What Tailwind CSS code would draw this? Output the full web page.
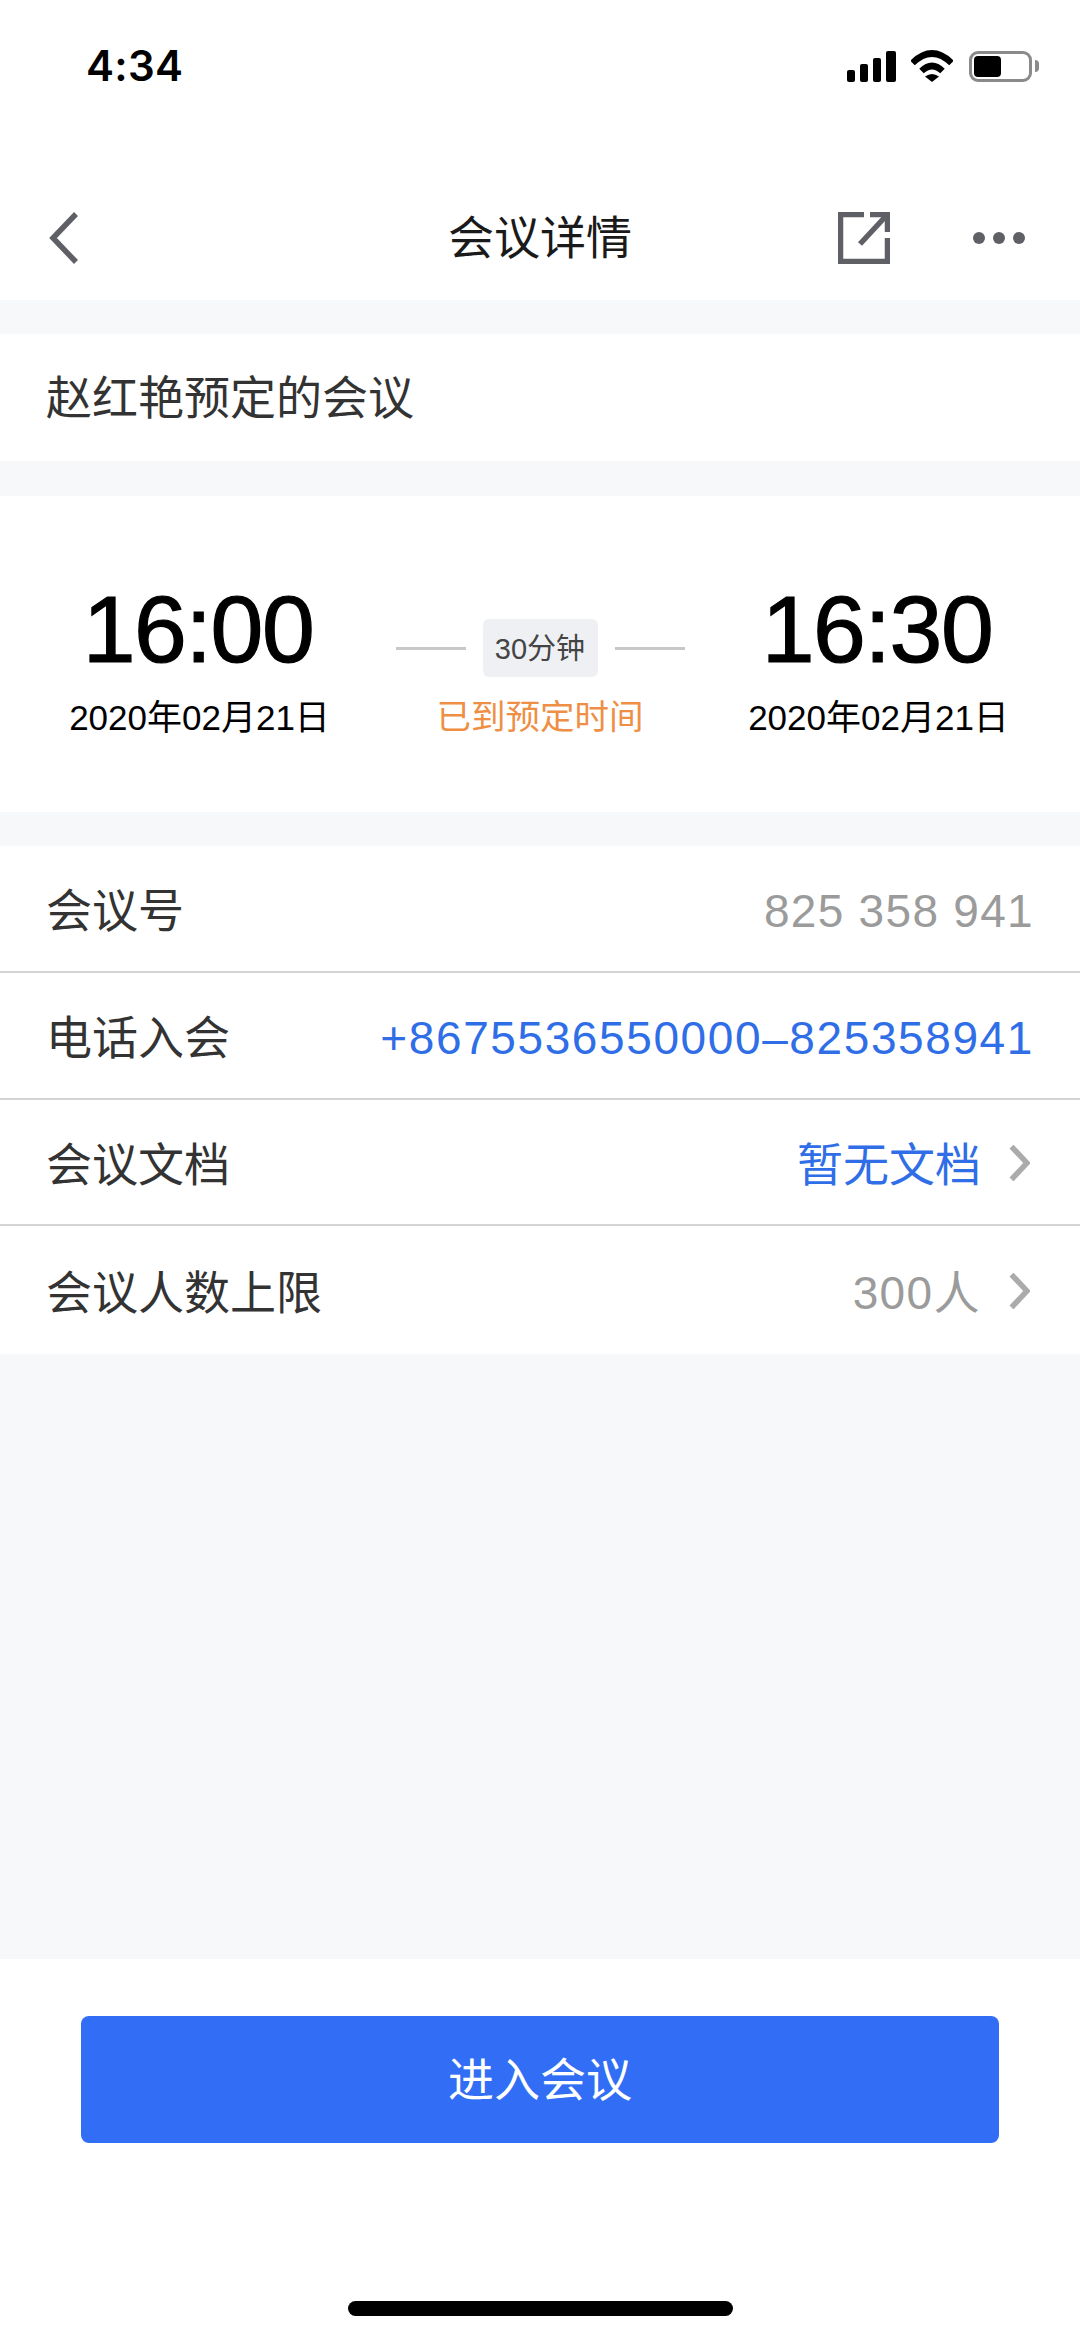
<!DOCTYPE html>
<html lang="zh-CN">
  <head>
    <meta charset="UTF-8" />
    <meta name="viewport" content="width=device-width, initial-scale=1.0" />
    <title>会议详情</title>
    <script src="https://cdn.jsdelivr.net/npm/@tailwindcss/browser@4"></script>
  </head>
  <body class="bg-white font-['Liberation_Sans','Noto_Sans_CJK_SC',sans-serif]">
    <div class="w-[1080px] h-[2339px] flex flex-col bg-[#f7f8fa]">
      <!-- Status bar -->
      <div class="h-[176px] shrink-0 bg-white flex items-start justify-between pt-[50px] pl-[86px] pr-[41px]">
        <div class="font-['Inter',sans-serif] font-semibold text-[42px] leading-[32px] tracking-[0.3px] text-black">4:34</div>
        <div class="flex items-center gap-[15px] h-[32px]">
          <div class="flex items-end gap-[5px] h-[32px]">
            <div class="w-[8px] h-[12px] rounded-[2px] bg-black"></div>
            <div class="w-[8px] h-[18px] rounded-[2px] bg-black"></div>
            <div class="w-[8px] h-[24px] rounded-[2px] bg-black"></div>
            <div class="w-[10px] h-[31px] rounded-[2px] bg-black"></div>
          </div>
          <svg class="w-[42px] h-[32px] mr-[1px]" viewBox="0 0 42 32" fill="none">
            <path d="M1.5 13 Q21 -6 40.5 13" stroke="#000" stroke-width="6.5" />
            <path d="M10.5 21 Q21 11 31.5 21" stroke="#000" stroke-width="6.5" />
            <path d="M14 26.5 Q21 21.5 28 26.5 L21 32 Z" fill="#000" />
          </svg>
          <div class="flex items-center gap-[3px]">
            <div class="w-[63px] h-[31px] rounded-[9px] border-[3px] border-[#8a8a8a] p-[2px]">
              <div class="w-[27px] h-full rounded-[4px] bg-black"></div>
            </div>
            <div class="w-[4px] h-[12px] rounded-r-[4px] bg-[#8a8a8a]"></div>
          </div>
        </div>
      </div>
      <!-- Nav -->
      <div class="h-[124px] shrink-0 bg-white relative flex items-center justify-center">
        <svg class="absolute left-[48px] top-[36px] w-[32px] h-[52px]" viewBox="0 0 32 52" fill="none">
          <path d="M28 2 L5 26 L28 50" stroke="#5f6066" stroke-width="5.5" />
        </svg>
        <div class="text-[46px] leading-[62px] text-[#1a1a1a]">会议详情</div>
        <svg class="absolute left-[838px] top-[36px] w-[52px] h-[52px]" viewBox="0 0 52 52" fill="none">
          <path d="M26 2.5 H2.5 V49.5 H49.5 V26" stroke="#5f6066" stroke-width="5.5" />
          <path d="M32 2.5 H49.5 V20" stroke="#5f6066" stroke-width="5.5" />
          <path d="M22 32 L48 4" stroke="#5f6066" stroke-width="5.5" />
        </svg>
        <div class="absolute left-[973px] top-[56px] flex gap-[8px]">
          <div class="w-[12px] h-[12px] rounded-full bg-[#5f6066]"></div>
          <div class="w-[12px] h-[12px] rounded-full bg-[#5f6066]"></div>
          <div class="w-[12px] h-[12px] rounded-full bg-[#5f6066]"></div>
        </div>
      </div>
      <!-- Title -->
      <div class="mt-[34px] h-[127px] shrink-0 bg-white flex items-center pl-[46px] pt-[2px] text-[46px] text-[#333]">赵红艳预定的会议</div>
      <!-- Time -->
      <div class="mt-[35px] h-[316px] shrink-0 bg-white grid grid-cols-[396px_288px_386px] pt-[80px]">
        <div class="flex flex-col items-center">
          <div class="text-[95px] leading-[106px] tracking-[-1.4px] [-webkit-text-stroke:1.2px_#000] text-black">16:00</div>
          <div class="mt-[13px] pl-[3px] text-[35px] leading-[46px] text-black">2020年02月21日</div>
        </div>
        <div class="flex flex-col items-center pt-[43px]">
          <div class="flex items-center gap-[17px]">
            <div class="w-[70px] h-[3px] bg-[#c8c8c8]"></div>
            <div class="w-[115px] h-[58px] rounded-[6px] bg-[#eff0f4] flex items-center justify-center pt-[3px] text-[29px] text-[#444]">30分钟</div>
            <div class="w-[70px] h-[3px] bg-[#c8c8c8]"></div>
          </div>
          <div class="mt-[17px] text-[34.5px] leading-[46px] text-[#ee8f45]">已到预定时间</div>
        </div>
        <div class="flex flex-col items-center">
          <div class="text-[95px] leading-[106px] tracking-[-1.4px] [-webkit-text-stroke:1.2px_#000] text-black">16:30</div>
          <div class="mt-[13px] pl-[3px] text-[35px] leading-[46px] text-black">2020年02月21日</div>
        </div>
      </div>
      <!-- Rows -->
      <div class="mt-[34px] shrink-0 bg-white flex flex-col text-[46px]">
        <div class="h-[127px] pl-[46px] pr-[46px] pt-[6px] flex items-center justify-between border-b-2 border-[#d4d4d6]">
          <span class="text-[#333]">会议号</span>
          <span class="text-[#9b9b9b] tracking-[1.3px]">825 358 941</span>
        </div>
        <div class="h-[127px] pl-[46px] pr-[46px] pt-[6px] flex items-center justify-between border-b-2 border-[#d4d4d6]">
          <span class="text-[#333]">电话入会</span>
          <span class="text-[#2f6ee6] tracking-[1.6px]">+8675536550000–825358941</span>
        </div>
        <div class="h-[126px] pl-[46px] pr-[50px] pt-[6px] flex items-center justify-between border-b-2 border-[#d4d4d6]">
          <span class="text-[#333]">会议文档</span>
          <div class="flex items-center gap-[28px]">
            <span class="text-[#2f6ee6]">暂无文档</span>
            <svg class="w-[21px] h-[36px] -mt-[5px]" viewBox="0 0 21 36" fill="none">
              <path d="M2.5 1.5 L18 18 L2.5 34.5" stroke="#ababab" stroke-width="5.5" />
            </svg>
          </div>
        </div>
        <div class="h-[128px] pl-[46px] pr-[50px] pt-[6px] flex items-center justify-between">
          <span class="text-[#333]">会议人数上限</span>
          <div class="flex items-center gap-[28px]">
            <span class="text-[#9b9b9b] tracking-[1.4px]">300人</span>
            <svg class="w-[21px] h-[36px] -mt-[5px]" viewBox="0 0 21 36" fill="none">
              <path d="M2.5 1.5 L18 18 L2.5 34.5" stroke="#ababab" stroke-width="5.5" />
            </svg>
          </div>
        </div>
      </div>
      <!-- Footer -->
      <div class="mt-auto h-[380px] shrink-0 bg-white flex flex-col items-center pt-[57px]">
        <div class="w-[918px] h-[127px] rounded-[8px] bg-[#316ef5] flex items-center justify-center pt-[2px] text-[46px] text-white">进入会议</div>
        <div class="mt-[158px] w-[385px] h-[15px] rounded-full bg-black"></div>
      </div>
    </div>
  </body>
</html>
